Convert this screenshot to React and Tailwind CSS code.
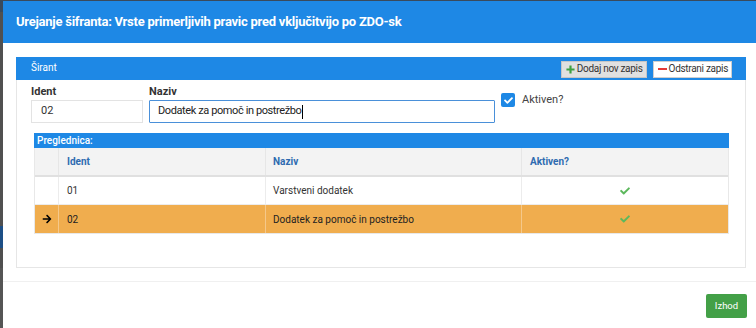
import React from "react";

const CheckIcon = ({ className }) => (
  <svg viewBox="0 0 512 512" className={className} fill="currentColor">
    <path d="M173.9 439.4l-166.4-166.4c-10-10-10-26.2 0-36.2l36.2-36.2c10-10 26.2-10 36.2 0L192 312.7 432.1 72.6c10-10 26.2-10 36.2 0l36.2 36.2c10 10 10 26.2 0 36.2l-294.4 294.4c-10 10-26.2 10-36.2 0z" />
  </svg>
);

const ArrowIcon = () => (
  <svg viewBox="0 0 448 512" className="w-[10px] h-[10px]" fill="currentColor">
    <path d="M190.5 66.9l22.2-22.2c9.4-9.4 24.6-9.4 33.9 0L441 239c9.4 9.4 9.4 24.6 0 33.9L246.6 467.3c-9.4 9.4-24.6 9.4-33.9 0l-22.2-22.2c-9.5-9.5-9.3-25 .4-34.3L311.4 296H24c-13.3 0-24-10.7-24-24v-32c0-13.3 10.7-24 24-24h287.4L190.9 101.2c-9.8-9.3-10-24.8-.4-34.3z" />
  </svg>
);

const PlusIcon = () => (
  <svg viewBox="0 0 10 10" className="w-[9px] h-[9px]">
    <path d="M5 0.5v9M0.5 5h9" stroke="#3fa142" strokeWidth="2.4" />
  </svg>
);

const rows = [
  { id: "01", name: "Varstveni dodatek", selected: false },
  { id: "02", name: "Dodatek za pomoč in postrežbo", selected: true },
];

export default function App() {
  return (
    <div className="relative w-[756px] h-[328px] overflow-hidden bg-[#4b4b4b] font-['Roboto','Noto_Sans',sans-serif]">
      {/* dimmed background page visible at the left edge */}
      <div className="absolute left-0 top-0 w-[3px] h-[328px] flex flex-col">
        <div className="h-[12px] bg-[#3a4a5c]" />
        <div className="h-[214px] bg-[#505050]" />
        <div className="h-[22px] bg-[#1d4f86]" />
        <div className="h-[20px] bg-[#4f4f4f]" />
        <div className="flex-1 bg-[#555555]" />
      </div>
      <div className="absolute left-0 top-0 w-[756px] h-[1px] bg-[#3a4a5c]" />

      {/* modal */}
      <div className="absolute left-[3px] top-[1px] w-[770px] h-[340px] bg-white flex flex-col">
        <div className="h-[42px] bg-[#1e88e5] flex items-center pl-[13px]">
          <span className="text-white text-[13px] font-bold tracking-[-0.25px]">
            Urejanje šifranta: Vrste primerljivih pravic pred vključitvijo po ZDO-sk
          </span>
        </div>

        <div className="pt-[14px] pl-[13px] w-[743px]">
          <div className="border border-[#e6e6e6] h-[211px] flex flex-col">
            {/* panel header */}
            <div className="h-[23px] bg-[#1e88e5] flex items-center justify-between pl-[15px] pr-[14px] -mx-px -mt-px">
              <span className="text-white text-[10px] leading-none mb-[2px]">Širant</span>
              <div className="flex items-center gap-[6px] pt-[1px]">
                <button className="h-[17px] pl-[4px] pr-[3px] bg-[#e0e0e0] border border-[#c6c6c6] flex items-center gap-[2px] text-[10px] tracking-[-0.3px] text-[#333] leading-none">
                  <PlusIcon />
                  Dodaj nov zapis
                </button>
                <button className="h-[17px] pl-[4px] pr-[3px] bg-white border border-[#cfcfcf] flex items-center gap-[2px] text-[10px] tracking-[-0.3px] text-[#333] leading-none">
                  <span className="inline-block w-[9px] h-[2px] bg-[#e53935]" />
                  Odstrani zapis
                </button>
              </div>
            </div>

            {/* form */}
            <div className="flex items-start pl-[14px] pt-[5px]">
              <div className="flex flex-col w-[112px]">
                <label className="text-[11px] font-bold text-[#333] h-[15px] leading-[14px]">Ident</label>
                <div className="h-[23px] border border-[#e3e3e3] flex items-center pl-[9px] text-[11px] text-[#333]">
                  02
                </div>
              </div>
              <div className="flex flex-col w-[346px] ml-[6px]">
                <label className="text-[11px] font-bold text-[#333] h-[15px] leading-[14px]">Naziv</label>
                <div className="h-[23px] border border-[#4a90d9] rounded-[1px] flex items-center pl-[8px] text-[11px] tracking-[-0.4px] text-[#222]">
                  Dodatek za pomoč in postrežbo
                  <span className="inline-block w-[1px] h-[14px] bg-black ml-[1px]" />
                </div>
              </div>
              <div className="flex items-center ml-[6px] mt-[7px]">
                <div className="w-[14px] h-[14px] rounded-[2px] bg-[#1e88e5] flex items-center justify-center text-white">
                  <CheckIcon className="w-[9px] h-[9px]" />
                </div>
                <span className="ml-[7px] text-[11px] text-[#444]">Aktiven?</span>
              </div>
            </div>

            {/* grid */}
            <div className="mt-[10px] ml-[17px] w-[695px] flex flex-col">
              <div className="h-[15px] bg-[#1e88e5] flex items-center pl-[3px]">
                <span className="text-white text-[10px] font-medium leading-none">Preglednica:</span>
              </div>
              <div className="border-l border-r border-b border-[#e8e8e8]">
                <div className="flex h-[29px] bg-[#f3f3f3] border-b-2 border-[#e0e0e0] text-[10px] font-bold text-[#2e6bb0]">
                  <div className="w-[24px] border-r border-[#e6e6e6]" />
                  <div className="w-[207px] border-r border-[#e6e6e6] flex items-center pl-[8px]">Ident</div>
                  <div className="w-[256px] border-r border-[#e6e6e6] flex items-center pl-[7px]">Naziv</div>
                  <div className="flex-1 flex items-center pl-[8px]">Aktiven?</div>
                </div>
                {rows.map((r) =>
                  r.selected ? (
                    <div key={r.id} className="flex h-[28px] bg-[#f0ad4e] text-[10px] text-[#222]">
                      <div className="w-[24px] border-r border-[#f5c88a] flex items-center justify-center text-black">
                        <ArrowIcon />
                      </div>
                      <div className="w-[207px] border-r border-[#f5c88a] flex items-center pl-[8px]">{r.id}</div>
                      <div className="w-[256px] border-r border-[#f5c88a] flex items-center pl-[7px]">{r.name}</div>
                      <div className="flex-1 flex items-center justify-center text-[#5cb85c]">
                        <CheckIcon className="w-[10px] h-[10px]" />
                      </div>
                    </div>
                  ) : (
                    <div key={r.id} className="flex h-[28px] bg-white border-b border-[#ececec] text-[10px] text-[#333]">
                      <div className="w-[24px] border-r border-[#ececec]" />
                      <div className="w-[207px] border-r border-[#ececec] flex items-center pl-[8px]">{r.id}</div>
                      <div className="w-[256px] border-r border-[#ececec] flex items-center pl-[7px]">{r.name}</div>
                      <div className="flex-1 flex items-center justify-center text-[#5cb85c]">
                        <CheckIcon className="w-[10px] h-[10px]" />
                      </div>
                    </div>
                  )
                )}
              </div>
            </div>
          </div>
        </div>

        {/* footer */}
        <div className="mt-[13px] border-t border-[#f0f0f0] w-[760px] h-[46px] pl-[703px] pt-[12px]">
          <button className="w-[41px] h-[24px] bg-[#43a047] rounded-[2px] text-white text-[9.5px] flex items-center justify-center">
            Izhod
          </button>
        </div>
      </div>
    </div>
  );
}
